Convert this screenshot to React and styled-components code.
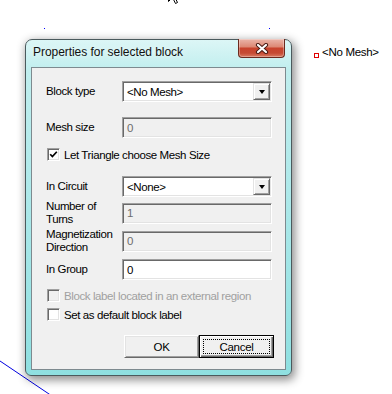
import React from 'react'
import styled, { createGlobalStyle } from 'styled-components'

const uiFont = '"Liberation Sans", Arial, sans-serif'

const GlobalStyle = createGlobalStyle`
    html, body {
        margin: 0;
        padding: 0;
        background: #fff;
    }
    body {
        font-family: ${uiFont};
    }
`

const Desktop = styled.div`
    position: relative;
    width: 392px;
    height: 394px;
    overflow: hidden;
    background: #fff;
`

const Drawing = styled.svg`
    position: absolute;
    left: 0;
    top: 0;
`

const Cursor = styled.svg`
    position: absolute;
    left: 168px;
    top: -15px;
`

const NodeDot = styled.div`
    position: absolute;
    left: ${p => p.x}px;
    top: ${p => p.y}px;
    width: 1px;
    height: 1px;
    background: #0000ff;
`

const BlockLabel = styled.div`
    position: absolute;
    left: 314px;
    top: 45px;
    display: flex;
    align-items: flex-start;
    gap: 3px;
    font-family: ${uiFont};
    font-size: 11.5px;
    line-height: 15px;
    letter-spacing: -0.3px;
    color: #000;
`

const LabelMarker = styled.span`
    width: 5px;
    height: 5px;
    margin-top: 8px;
    box-sizing: border-box;
    border: 1px solid #e00000;
`

const Window = styled.div`
    position: absolute;
    left: 25px;
    top: 39px;
    width: 267px;
    height: 337px;
    box-sizing: border-box;
    display: flex;
    flex-direction: column;
    padding: 0 5px 5px;
    border: 1px solid #4b5a5d;
    border-radius: 7px 7px 6px 6px;
    background: linear-gradient(180deg, #dcf6f6 0%, #c0eeee 9%, #aee9ea 45%, #8fe0e1 100%);
    box-shadow: 2px 3px 10px 1px rgba(0, 0, 0, 0.45);
`

const TitleBar = styled.div`
    height: 27px;
    display: flex;
    align-items: flex-start;
`

const TitleText = styled.div`
    margin: 5px 0 0 2px;
    font-family: ${uiFont};
    font-size: 12px;
    line-height: 15px;
    letter-spacing: -0.05px;
    color: #101010;
    text-shadow: 0 0 6px rgba(255, 255, 255, 0.9);
`

const CloseButton = styled.div`
    margin: -1px 1px 0 auto;
    width: 47px;
    height: 19px;
    box-sizing: border-box;
    display: flex;
    align-items: center;
    justify-content: center;
    border: 1px solid #6b2a1e;
    border-top: none;
    border-radius: 0 0 4px 4px;
    background: linear-gradient(180deg, #eab5a9 0%, #dd8a76 42%, #c8432c 52%, #c54a33 78%, #d97c62 100%);
    box-shadow: inset 0 0 0 1px rgba(255, 255, 255, 0.3);
`

const Client = styled.div`
    flex: 1;
    box-sizing: border-box;
    display: flex;
    flex-direction: column;
    padding: 13px 13px 0 14px;
    background: #f0f0f0;
    border: 1px solid #7d8a8f;
`

const Row = styled.div`
    display: grid;
    grid-template-columns: 76px 150px;
    align-items: center;
    height: 21px;
    margin-top: ${p => p.gap || 0}px;
`

const Label = styled.div`
    font-family: ${uiFont};
    font-size: 11.5px;
    line-height: 13px;
    letter-spacing: -0.4px;
    color: #000;
    white-space: nowrap;
`

const Field = styled.div`
    height: 21px;
    box-sizing: border-box;
    display: flex;
    align-items: center;
    padding-left: 4px;
    border: 1px solid;
    border-color: #a0a0a0 #fff #fff #a0a0a0;
    box-shadow: inset 1px 1px #696969, inset -1px -1px #e3e3e3;
    background: ${p => (p.disabled ? '#f0f0f0' : '#fff')};
    color: ${p => (p.disabled ? '#6d6d6d' : '#000')};
    font-family: ${uiFont};
    font-size: 11.5px;
    letter-spacing: -0.4px;
`

const ComboBox = styled(Field)`
    padding: 1px 1px 1px 4px;
    justify-content: space-between;
    align-items: stretch;
`

const ComboText = styled.span`
    display: flex;
    align-items: center;
`

const DropButton = styled.span`
    width: 17px;
    box-sizing: border-box;
    display: flex;
    align-items: center;
    justify-content: center;
    background: #f0f0f0;
    border: 1px solid;
    border-color: #e3e3e3 #696969 #696969 #e3e3e3;
    box-shadow: inset 1px 1px #fff, inset -1px -1px #a0a0a0;
`

const Arrow = styled.span`
    width: 0;
    height: 0;
    border-left: 3.5px solid transparent;
    border-right: 3.5px solid transparent;
    border-top: 4px solid #000;
`

const CheckRow = styled.div`
    display: flex;
    align-items: center;
    gap: 4px;
    height: 13px;
    margin: ${p => p.gap || 0}px 0 0 1px;
    font-family: ${uiFont};
    font-size: 11.5px;
    letter-spacing: -0.4px;
    white-space: nowrap;
    color: ${p => (p.disabled ? '#a0a0a0' : '#000')};
`

const CheckBox = styled.span`
    flex: none;
    width: 13px;
    height: 13px;
    box-sizing: border-box;
    display: flex;
    align-items: center;
    justify-content: center;
    border: 1px solid;
    border-color: #a0a0a0 #fff #fff #a0a0a0;
    box-shadow: inset 1px 1px #696969, inset -1px -1px #e3e3e3;
    background: ${p => (p.disabled ? '#f0f0f0' : '#fff')};
`

const ButtonRow = styled.div`
    display: flex;
    justify-content: flex-end;
    margin: 14px -2px 0 0;
`

const PushButton = styled.div`
    width: 75px;
    height: 23px;
    box-sizing: border-box;
    display: flex;
    align-items: center;
    justify-content: center;
    background: #f0f0f0;
    border: 1px solid;
    border-color: #fff #696969 #696969 #fff;
    box-shadow: inset 1px 1px #e3e3e3, inset -1px -1px #a0a0a0;
    font-family: ${uiFont};
    font-size: 11.5px;
    letter-spacing: -0.3px;
    color: #000;
`

const DefaultButton = styled(PushButton)`
    border-color: #000;
    padding: 3px;
    box-shadow: inset 1px 1px #fff, inset -1px -1px #696969, inset -2px -2px #a0a0a0;
`

const FocusRing = styled.span`
    flex: 1;
    align-self: stretch;
    display: flex;
    align-items: center;
    justify-content: center;
    border: 1px dotted #000;
`

const CloseGlyph = () => (
    <svg width="14" height="11" viewBox="0 0 14 11">
        <path d="M3 2 L11 9 M11 2 L3 9" stroke="#4a1c14" strokeWidth="4.2" strokeLinecap="round" />
        <path d="M3 2 L11 9 M11 2 L3 9" stroke="#fff" strokeWidth="2.2" strokeLinecap="round" />
    </svg>
)

const CheckMark = () => (
    <svg width="9" height="9" viewBox="0 0 9 9">
        <polyline points="1.2,4.2 3.4,6.6 7.8,1.8" fill="none" stroke="#000" strokeWidth="1.7" />
    </svg>
)

const FieldRow = ({ label, gap, children }) => (
    <Row gap={gap}>
        <Label>{label}</Label>
        {children}
    </Row>
)

const Combo = ({ value }) => (
    <ComboBox>
        <ComboText>{value}</ComboText>
        <DropButton><Arrow /></DropButton>
    </ComboBox>
)

const Check = ({ checked, disabled, gap, children }) => (
    <CheckRow gap={gap} disabled={disabled}>
        <CheckBox disabled={disabled}>{checked && <CheckMark />}</CheckBox>
        {children}
    </CheckRow>
)

export default function App() {
    return (
        <Desktop>
            <GlobalStyle />
            <Drawing width="392" height="394">
                <line x1="0" y1="361" x2="52" y2="396" stroke="#0000e0" strokeWidth="1" />
            </Drawing>
            <Cursor width="13" height="20" viewBox="0 0 13 20">
                <path d="M0.5 0.5 L0.5 16.5 L4.5 12.5 L7.5 18.5 L9.5 17.5 L6.5 11.5 L11.5 11.5 Z" fill="#fff" stroke="#000" />
            </Cursor>
            <NodeDot x={44} y={28} />
            <NodeDot x={269} y={28} />
            <BlockLabel>
                <LabelMarker />
                <span>&lt;No Mesh&gt;</span>
            </BlockLabel>
            <Window>
                <TitleBar>
                    <TitleText>Properties for selected block</TitleText>
                    <CloseButton><CloseGlyph /></CloseButton>
                </TitleBar>
                <Client>
                    <FieldRow label="Block type">
                        <Combo value="<No Mesh>" />
                    </FieldRow>
                    <FieldRow label="Mesh size" gap={15}>
                        <Field disabled>0</Field>
                    </FieldRow>
                    <Check checked gap={10}>Let Triangle choose Mesh Size</Check>
                    <FieldRow label="In Circuit" gap={15}>
                        <Combo value="<None>" />
                    </FieldRow>
                    <FieldRow label={<>Number of<br />Turns</>} gap={3}>
                        <Field disabled>1</Field>
                    </FieldRow>
                    <FieldRow label={<>Magnetization<br />Direction</>} gap={7}>
                        <Field disabled>0</Field>
                    </FieldRow>
                    <FieldRow label="In Group" gap={10}>
                        <Field>0</Field>
                    </FieldRow>
                    <Check disabled gap={9}>Block label located in an external region</Check>
                    <Check gap={6}>Set as default block label</Check>
                    <ButtonRow>
                        <PushButton>OK</PushButton>
                        <DefaultButton><FocusRing>Cancel</FocusRing></DefaultButton>
                    </ButtonRow>
                </Client>
            </Window>
        </Desktop>
    )
}
